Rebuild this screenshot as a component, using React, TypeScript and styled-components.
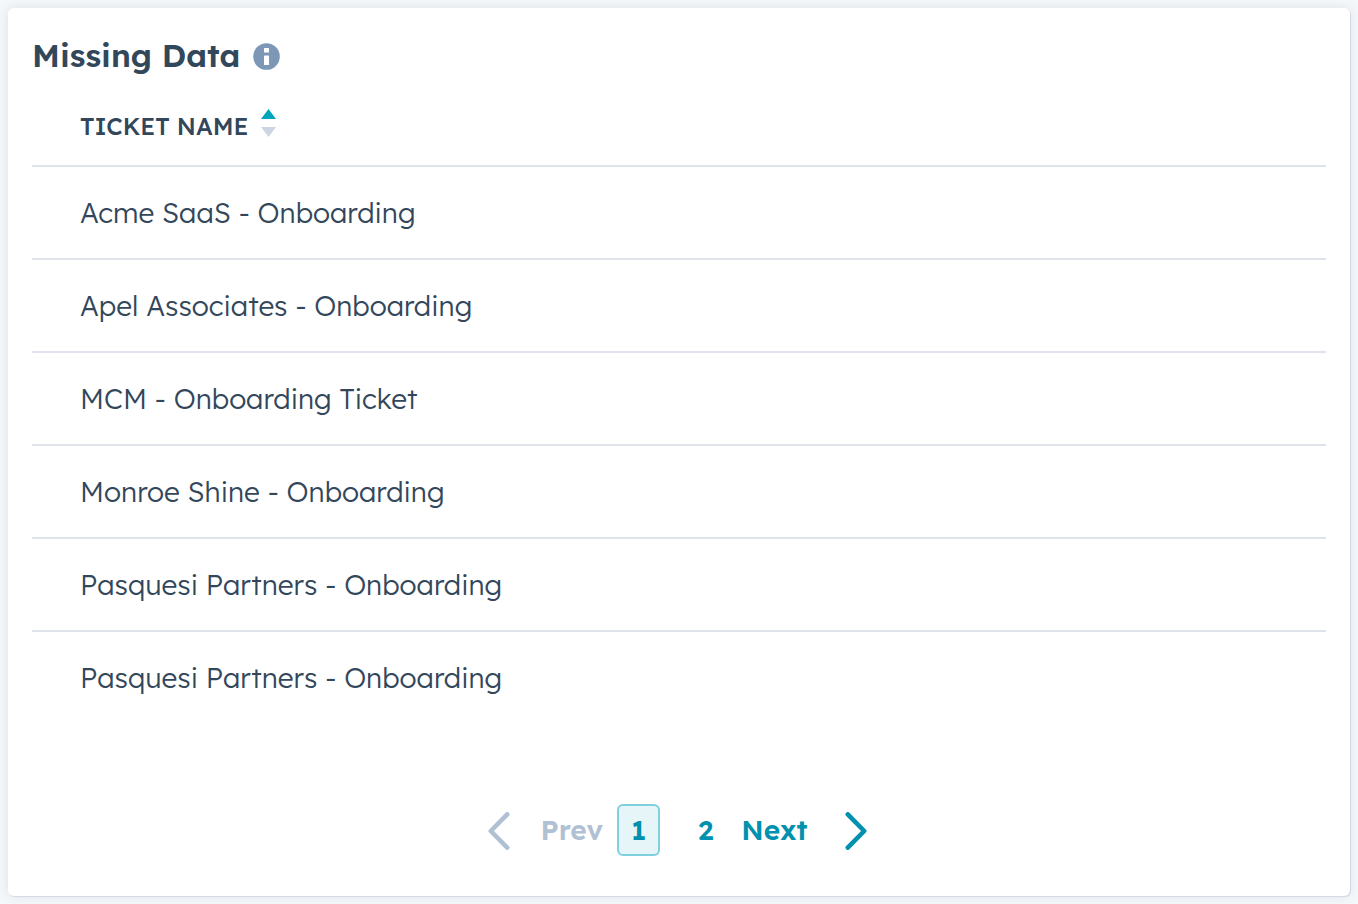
import React from "react";
import styled, { createGlobalStyle } from "styled-components";

const GlobalStyle = createGlobalStyle`
  * { box-sizing: border-box; }
  body {
    margin: 0;
    background: #f5f8fa;
    color: #33475b;
    font-family: "Lexend Deca", Lexend, Inter, "Liberation Sans", sans-serif;
  }
`;

const Page = styled.div`
  display: flex;
  min-height: 100vh;
  padding: 8px;
`;

const Card = styled.section`
  display: flex;
  flex: 1;
  flex-direction: column;
  padding: 24px 24px 40px;
  border-radius: 6px;
  background: #fff;
  box-shadow: 1px 1px 0 #d3dae4, 0 0 12px rgba(45, 62, 80, 0.12);
`;

const CardHeader = styled.header`
  display: flex;
  align-items: center;
  gap: 13px;
  height: 48px;
`;

const Title = styled.h1`
  margin: 0;
  padding-bottom: 2px;
  font-size: 32px;
  font-weight: 600;
  line-height: 46px;
`;

const InfoButton = styled.button`
  display: flex;
  padding: 0;
  border: 0;
  background: none;
  cursor: pointer;
`;

const Table = styled.table`
  width: 100%;
  margin-top: 8px;
  border-collapse: separate;
  border-spacing: 0;
`;

const HeadCell = styled.th`
  height: 79px;
  padding: 0 48px 2px;
  border-bottom: 2px solid #dfe3eb;
  text-align: left;
`;

const SortButton = styled.button`
  display: flex;
  align-items: center;
  gap: 12px;
  padding: 0;
  border: 0;
  background: none;
  color: inherit;
  font: inherit;
  font-size: 24px;
  font-weight: 500;
  line-height: 32px;
  text-transform: uppercase;
  cursor: pointer;
`;

const SortIcon = styled.svg`
  margin-bottom: 6px;
`;

const Cell = styled.td`
  height: 93px;
  padding: 0 48px;
  border-bottom: 2px solid #dfe3eb;
  font-size: 28px;
  font-weight: 300;
  line-height: 40px;

  tr:last-child > & {
    border-bottom-color: transparent;
  }
`;

const Pagination = styled.nav`
  display: flex;
  align-items: center;
  justify-content: center;
  margin-top: auto;
  padding-right: 3px;
`;

const StepButton = styled.button<{ $gap: number }>`
  display: flex;
  align-items: center;
  gap: ${({ $gap }) => $gap}px;
  height: 52px;
  padding: 0 0 2px;
  border: 0;
  background: none;
  color: #0091ae;
  font: inherit;
  font-size: 28px;
  font-weight: 600;
  cursor: pointer;

  &:disabled {
    color: #b0c1d4;
    cursor: default;
  }
`;

const ChevronIcon = styled.svg`
  margin-top: 4px;
`;

const Pages = styled.div`
  display: flex;
  gap: 24px;
  margin: 0 14px;
`;

const PageButton = styled.button<{ $active?: boolean }>`
  min-width: 43px;
  height: 52px;
  padding: 0 0 2px;
  border: 2px solid ${({ $active }) => ($active ? "#7fd1de" : "transparent")};
  border-radius: 6px;
  background: ${({ $active }) => ($active ? "#e5f5f8" : "none")};
  color: #0091ae;
  font: inherit;
  font-size: 28px;
  font-weight: 600;
  cursor: pointer;
`;

const tickets = [
  "Acme SaaS - Onboarding",
  "Apel Associates - Onboarding",
  "MCM - Onboarding Ticket",
  "Monroe Shine - Onboarding",
  "Pasquesi Partners - Onboarding",
  "Pasquesi Partners - Onboarding",
];

function Chevron({ direction }: { direction: "left" | "right" }) {
  return (
    <ChevronIcon width="22" height="38" viewBox="0 0 22 38" fill="none" stroke="currentColor" strokeWidth="4.6" strokeLinecap="round" strokeLinejoin="round" aria-hidden="true">
      <path d={direction === "left" ? "M19.2 2.4 2.8 19l16.4 16.6" : "M2.8 2.4l16.4 16.6-16.4 16.6"} />
    </ChevronIcon>
  );
}

export default function App() {
  return (
    <>
      <GlobalStyle />
      <Page>
        <Card>
          <CardHeader>
            <Title>Missing Data</Title>
            <InfoButton type="button" aria-label="About this report">
              <svg width="27" height="27" viewBox="0 0 27 27" aria-hidden="true">
                <circle cx="13.5" cy="13.5" r="13.3" fill="#7c98b6" />
                <rect x="11" y="5" width="5" height="4.5" rx="0.6" fill="#fff" />
                <rect x="11" y="12.5" width="5" height="9.5" rx="0.6" fill="#fff" />
              </svg>
            </InfoButton>
          </CardHeader>
          <Table>
            <thead>
              <tr>
                <HeadCell scope="col" aria-sort="ascending">
                  <SortButton type="button">
                    Ticket name
                    <SortIcon width="16" height="28" viewBox="0 0 16 28" aria-hidden="true">
                      <path d="M7.5 0L15 10H0z" fill="#00a4bd" />
                      <path d="M0 18h15L7.5 28z" fill="#cbd6e2" />
                    </SortIcon>
                  </SortButton>
                </HeadCell>
              </tr>
            </thead>
            <tbody>
              {tickets.map((name, index) => (
                <tr key={index}>
                  <Cell>{name}</Cell>
                </tr>
              ))}
            </tbody>
          </Table>
          <Pagination aria-label="Pagination">
            <StepButton type="button" $gap={30} disabled>
              <Chevron direction="left" />
              Prev
            </StepButton>
            <Pages>
              <PageButton type="button" $active aria-current="page">1</PageButton>
              <PageButton type="button">2</PageButton>
            </Pages>
            <StepButton type="button" $gap={37}>
              Next
              <Chevron direction="right" />
            </StepButton>
          </Pagination>
        </Card>
      </Page>
    </>
  );
}
